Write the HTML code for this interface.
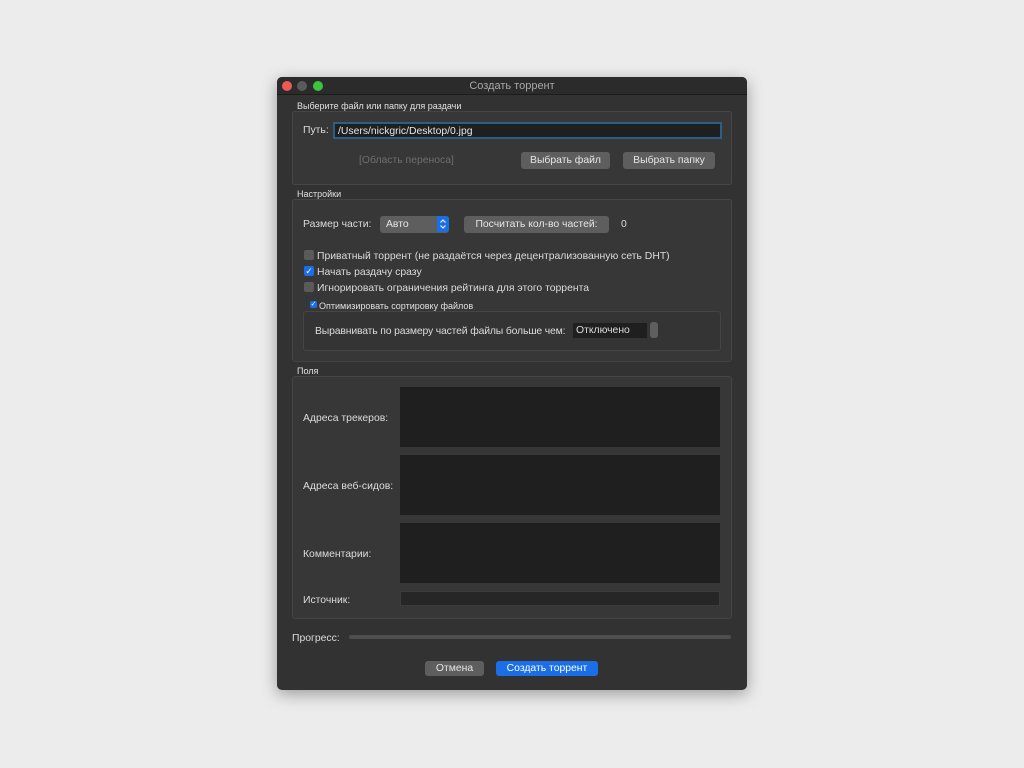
<!DOCTYPE html>
<html><head><meta charset="utf-8"><style>
*{box-sizing:border-box;margin:0;padding:0}
body{width:1024px;height:768px;background:#ececec;position:relative;overflow:hidden;font-family:"Liberation Sans","DejaVu Sans",sans-serif;color:#dcdcdc;font-size:10.4px}
.a{position:absolute}
.win{left:277px;top:77px;width:470px;height:613px;background:#323232;border-radius:5px;box-shadow:0 4px 16px rgba(0,0,0,.35);overflow:hidden}
.tb{left:0;top:0;width:470px;height:18px;background:#2b2b2b;border-bottom:1px solid #1c1c1c;text-align:center;line-height:18px;color:#a8a8a8;font-size:11px}
.dot{width:10px;height:10px;border-radius:50%;top:4px}
.grp{background:#373737;border:1px solid #454545;border-radius:3px}
.lbl{font-size:9px;color:#e0e0e0}
.btn{background:#5e5e5e;border-radius:3px;color:#e6e6e6;text-align:center;font-size:10.4px;line-height:17px}
.ta{background:#1f1f1f}
.cb{width:10px;height:10px;border-radius:2px;background:#5a5a5a}
.cb.on{background:#1a6ee8;color:#fff;font-size:9px;line-height:10px;text-align:center}
</style></head><body>
<div class="a win">
 <div class="a tb">Создать торрент</div>
 <div class="a dot" style="left:5px;background:#ed5a55"></div>
 <div class="a dot" style="left:20px;background:#5a5a5a"></div>
 <div class="a dot" style="left:36px;background:#3cc43f"></div>

 <div class="a lbl" style="left:20px;top:24px">Выберите файл или папку для раздачи</div>
 <div class="a grp" style="left:15px;top:34px;width:440px;height:74px"></div>
 <div class="a" style="left:26px;top:48px">Путь:</div>
 <div class="a" style="left:56px;top:45px;width:389px;height:17px;background:#1f1f1f;border:2px solid #2b5f86;color:#e6e6e6;padding-left:3px;line-height:15px">/Users/nickgric/Desktop/0.jpg</div>
 <div class="a" style="left:82px;top:78px;color:#6e6e6e">[Область переноса]</div>
 <div class="a btn" style="left:244px;top:75px;width:89px">Выбрать файл</div>
 <div class="a btn" style="left:346px;top:75px;width:92px">Выбрать папку</div>

 <div class="a lbl" style="left:20px;top:112px">Настройки</div>
 <div class="a grp" style="left:15px;top:122px;width:440px;height:163px"></div>
 <div class="a" style="left:26px;top:142px">Размер части:</div>
 <div class="a btn" style="left:103px;top:139px;width:69px;text-align:left;padding-left:6px">Авто</div>
 <div class="a" style="left:160px;top:139px;width:12px;height:16px;background:#1a6ee8;border-radius:0 3px 3px 0"><svg width="12" height="16" viewBox="0 0 12 16"><path d="M3.5 6.5 L6 4 L8.5 6.5 M3.5 9.5 L6 12 L8.5 9.5" stroke="#fff" stroke-width="1" fill="none"/></svg></div>
 <div class="a btn" style="left:187px;top:139px;width:145px">Посчитать кол-во частей:</div>
 <div class="a" style="left:344px;top:142px">0</div>
 <div class="a cb" style="left:27px;top:173px"></div>
 <div class="a" style="left:40px;top:174px">Приватный торрент (не раздаётся через децентрализованную сеть DHT)</div>
 <div class="a cb on" style="left:27px;top:189px">✓</div>
 <div class="a" style="left:40px;top:190px">Начать раздачу сразу</div>
 <div class="a cb" style="left:27px;top:205px"></div>
 <div class="a" style="left:40px;top:206px">Игнорировать ограничения рейтинга для этого торрента</div>
 <div class="a cb on" style="left:33px;top:224px;width:7px;height:7px;font-size:7px;line-height:7px">✓</div>
 <div class="a lbl" style="left:42px;top:224px">Оптимизировать сортировку файлов</div>
 <div class="a grp" style="left:26px;top:234px;width:418px;height:40px;background:#343434"></div>
 <div class="a" style="left:38px;top:249px;letter-spacing:-0.15px">Выравнивать по размеру частей файлы больше чем:</div>
 <div class="a" style="left:296px;top:246px;width:74px;height:15px;background:#1f1f1f;padding-left:3px;line-height:16px">Отключено</div>
 <div class="a" style="left:373px;top:245px;width:8px;height:16px;background:#5e5e5e;border-radius:3px"></div>

 <div class="a lbl" style="left:20px;top:289px">Поля</div>
 <div class="a grp" style="left:15px;top:299px;width:440px;height:243px"></div>
 <div class="a" style="left:26px;top:336px">Адреса трекеров:</div>
 <div class="a ta" style="left:123px;top:310px;width:320px;height:60px"></div>
 <div class="a" style="left:26px;top:404px">Адреса веб-сидов:</div>
 <div class="a ta" style="left:123px;top:378px;width:320px;height:60px"></div>
 <div class="a" style="left:26px;top:472px">Комментарии:</div>
 <div class="a ta" style="left:123px;top:446px;width:320px;height:60px"></div>
 <div class="a" style="left:26px;top:518px">Источник:</div>
 <div class="a ta" style="left:123px;top:514px;width:320px;height:15px;background:#262626;border:1px solid #3c3c3c"></div>

 <div class="a" style="left:15px;top:556px">Прогресс:</div>
 <div class="a" style="left:72px;top:558px;width:382px;height:4px;background:#4e4e4e;border-radius:2px"></div>

 <div class="a btn" style="left:148px;top:584px;width:59px;height:15px;line-height:16px">Отмена</div>
 <div class="a btn" style="left:219px;top:584px;width:102px;height:15px;line-height:16px;background:#1a6ee8;color:#fff">Создать торрент</div>
</div>
</body></html>
